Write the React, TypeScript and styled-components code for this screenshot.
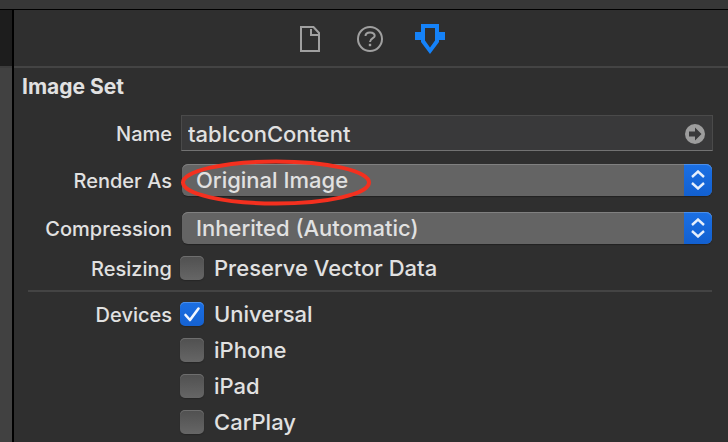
import React, { useState } from "react";
import styled, { createGlobalStyle } from "styled-components";

const GlobalStyle = createGlobalStyle`
  *, *::before, *::after { box-sizing: border-box; }
  body {
    margin: 0;
    background: #2f2f2f;
    color: #e1e1e1;
    font-family: Inter, "Liberation Sans", sans-serif;
    font-weight: 500;
  }
  button, input, select { font: inherit; color: inherit; margin: 0; }
`;

const Window = styled.div`
  display: flex;
  flex-direction: column;
  min-height: 100vh;
`;

const TitleStrip = styled.div`
  height: 10px;
  background: #373737;
  border-bottom: 1px solid #000;
`;

const Body = styled.div`
  display: flex;
  flex: 1;
`;

const Gutter = styled.div`
  display: flex;
  flex-direction: column;
  width: 14px;
  flex: none;
  background: #414141;
  border-right: 2px solid #000;
`;

const GutterHeader = styled.div`
  height: 58px;
  background: #1d1d1d;
  border-bottom: 2px solid #3c3c3c;
`;

const Inspector = styled.main`
  flex: 1;
  min-width: 0;
`;

const Tabs = styled.nav`
  display: flex;
  align-items: center;
  justify-content: center;
  gap: 28px;
  height: 58px;
  padding: 2px 2px 0 0;
  border-bottom: 2px solid #444;
`;

const Tab = styled.button<{ $active?: boolean }>`
  display: grid;
  place-items: center;
  width: 32px;
  height: 32px;
  padding: 0;
  border: 0;
  background: none;
  color: ${(p) => (p.$active ? "#1582f8" : "#a0a0a0")};
`;

const Heading = styled.h1`
  margin: 0;
  padding: 6px 8px 15px;
  font-size: 21px;
  line-height: 26px;
  font-weight: 700;
`;

const Form = styled.form`
  padding: 0 16px 8px 14px;
`;

const Row = styled.div<{ $after: number }>`
  display: grid;
  grid-template-columns: 144px minmax(0, 1fr);
  column-gap: 10px;
  margin-bottom: ${(p) => p.$after}px;
`;

const Label = styled.label<{ $height: number }>`
  height: ${(p) => p.$height}px;
  padding-top: 1px;
  font-size: 20px;
  line-height: ${(p) => p.$height}px;
  text-align: right;
  white-space: nowrap;
`;

const NameField = styled.div`
  display: flex;
  align-items: center;
  height: 36px;
  margin: 0 -1px;
  padding: 2px 7px 0 6px;
  background: #39393a;
  border: 1px solid #4a4a4a;
  border-bottom-color: #727272;
`;

const NameInput = styled.input`
  flex: 1;
  min-width: 0;
  padding: 0;
  border: 0;
  outline: 0;
  background: none;
  font-size: 22px;
  line-height: 28px;
`;

const JumpButton = styled.button`
  display: flex;
  padding: 0;
  border: 0;
  background: none;
  color: #9d9d9d;
`;

const PopUp = styled.div`
  position: relative;
  display: flex;
  height: 32px;
  border-radius: 6px;
  background: #646464;
  box-shadow: inset 0 1px 0 #808080, 0 1px 1px #222;
`;

const PopUpSelect = styled.select`
  appearance: none;
  flex: 1;
  min-width: 0;
  padding: 0 40px 0 14px;
  border: 0;
  outline: 0;
  background: none;
  font-size: 22px;
  line-height: 32px;
`;

const PopUpCap = styled.span`
  position: absolute;
  top: 0;
  right: 0;
  display: grid;
  place-items: center;
  width: 28px;
  height: 32px;
  border-radius: 0 6px 6px 0;
  background: linear-gradient(#1b70e4, #1260d0);
  box-shadow: inset 0 1px 0 #4a8feb;
  pointer-events: none;
`;

const Annotation = styled.svg`
  position: absolute;
  left: -2px;
  top: -5px;
  pointer-events: none;
`;

const Check = styled.label`
  display: flex;
  align-items: center;
  gap: 10px;
  height: 24px;
  margin-left: -2px;
  font-size: 22px;
  line-height: 24px;
  white-space: nowrap;
`;

const CheckBox = styled.span<{ $on: boolean }>`
  position: relative;
  width: 24px;
  height: 24px;
  flex: none;
  border-radius: 5px;
  background: ${(p) =>
    p.$on ? "linear-gradient(#1b6fe3, #1562d2)" : "linear-gradient(#505050, #666)"};
  box-shadow: inset 0 1px 0 ${(p) => (p.$on ? "#4a8feb" : "#6e6e6e")}, 0 1px 1px #262626;
`;

const CheckInput = styled.input`
  position: absolute;
  inset: 0;
  width: 100%;
  height: 100%;
  appearance: none;
`;

const Tick = styled.svg`
  display: block;
  pointer-events: none;
`;

const CheckList = styled.div`
  display: flex;
  flex-direction: column;
  gap: 12px;
`;

const Divider = styled.hr`
  height: 2px;
  margin: 0 0 10px;
  border: 0;
  background: #444;
`;

function FileIcon() {
  return (
    <svg width="22" height="28" viewBox="0 0 22 28" fill="none" stroke="currentColor" strokeWidth="2">
      <path d="M2 2H14.5L20 8V26H2Z" />
      <path d="M12 4V10H19" />
    </svg>
  );
}

function HelpIcon() {
  return (
    <svg width="28" height="28" viewBox="0 0 28 28" fill="none" stroke="currentColor" strokeWidth="2">
      <circle cx="14" cy="14" r="12" />
      <path d="M9.500 11C9.500 8.500 11.300 7.500 14 7.500S18.700 8.700 18.700 11S14 13.200 14 17" />
      <path d="M14 18.800V21.200" strokeWidth="2.400" />
    </svg>
  );
}

function AttributesIcon() {
  return (
    <svg width="30" height="30" viewBox="0 0 30 30" fill="currentColor" fillRule="evenodd">
      <path d="M6 0H24V8H30V16H24V18L15 30L6 18V16H0V8H6ZM10 4V16.500L15 23.500L20 16.500V4Z" />
    </svg>
  );
}

function ArrowIcon() {
  return (
    <svg width="20" height="20" viewBox="0 0 20 20">
      <circle cx="10" cy="10" r="10" fill="currentColor" />
      <path d="M4 7.500H10V3.500L16.500 10L10 16.500V12.500H4Z" fill="#39393a" />
    </svg>
  );
}

function Dropdown({ id, value, children }: { id: string; value: string; children?: React.ReactNode }) {
  return (
    <PopUp>
      <PopUpSelect id={id} defaultValue={value}>
        <option>{value}</option>
      </PopUpSelect>
      <PopUpCap>
        <svg width="14" height="20" viewBox="0 0 14 20" fill="none" stroke="#e6effc" strokeWidth="2.400">
          <path d="M1 7L7 1.500L13 7M1 13L7 18.500L13 13" />
        </svg>
      </PopUpCap>
      {children}
    </PopUp>
  );
}

function CheckOption({ id, label, initial = false }: { id: string; label: string; initial?: boolean }) {
  const [on, setOn] = useState(initial);
  return (
    <Check htmlFor={id}>
      <CheckBox $on={on}>
        <CheckInput id={id} type="checkbox" checked={on} onChange={() => setOn(!on)} />
        {on && (
          <Tick width="24" height="24" viewBox="0 0 24 24" fill="none" stroke="#f2f7ff" strokeWidth="2.600" strokeLinecap="round" strokeLinejoin="round">
            <path d="M5.500 13L10 18L18.500 6.500" />
          </Tick>
        )}
      </CheckBox>
      {label}
    </Check>
  );
}

export default function App() {
  return (
    <>
      <GlobalStyle />
      <Window>
        <TitleStrip />
        <Body>
          <Gutter>
            <GutterHeader />
          </Gutter>
          <Inspector>
            <Tabs>
              <Tab type="button" aria-label="File inspector"><FileIcon /></Tab>
              <Tab type="button" aria-label="Quick help"><HelpIcon /></Tab>
              <Tab type="button" aria-label="Attributes inspector" $active><AttributesIcon /></Tab>
            </Tabs>
            <Heading>Image Set</Heading>
            <Form>
              <Row $after={13}>
                <Label htmlFor="name" $height={36}>Name</Label>
                <NameField>
                  <NameInput id="name" defaultValue="tabIconContent" />
                  <JumpButton type="button" aria-label="Show"><ArrowIcon /></JumpButton>
                </NameField>
              </Row>
              <Row $after={16}>
                <Label htmlFor="render" $height={32}>Render As</Label>
                <Dropdown id="render" value="Original Image">
                  <Annotation width="192" height="48" viewBox="0 0 192 48" fill="none" stroke="#f4301f" strokeWidth="4">
                    <ellipse cx="96" cy="23.500" rx="93" ry="21" />
                  </Annotation>
                </Dropdown>
              </Row>
              <Row $after={12}>
                <Label htmlFor="compression" $height={32}>Compression</Label>
                <Dropdown id="compression" value="Inherited (Automatic)" />
              </Row>
              <Row $after={10}>
                <Label as="span" $height={24}>Resizing</Label>
                <CheckOption id="vector" label="Preserve Vector Data" />
              </Row>
              <Divider />
              <Row $after={0}>
                <Label as="span" $height={24}>Devices</Label>
                <CheckList>
                  <CheckOption id="universal" label="Universal" initial />
                  <CheckOption id="iphone" label="iPhone" />
                  <CheckOption id="ipad" label="iPad" />
                  <CheckOption id="carplay" label="CarPlay" />
                </CheckList>
              </Row>
            </Form>
          </Inspector>
        </Body>
      </Window>
    </>
  );
}
